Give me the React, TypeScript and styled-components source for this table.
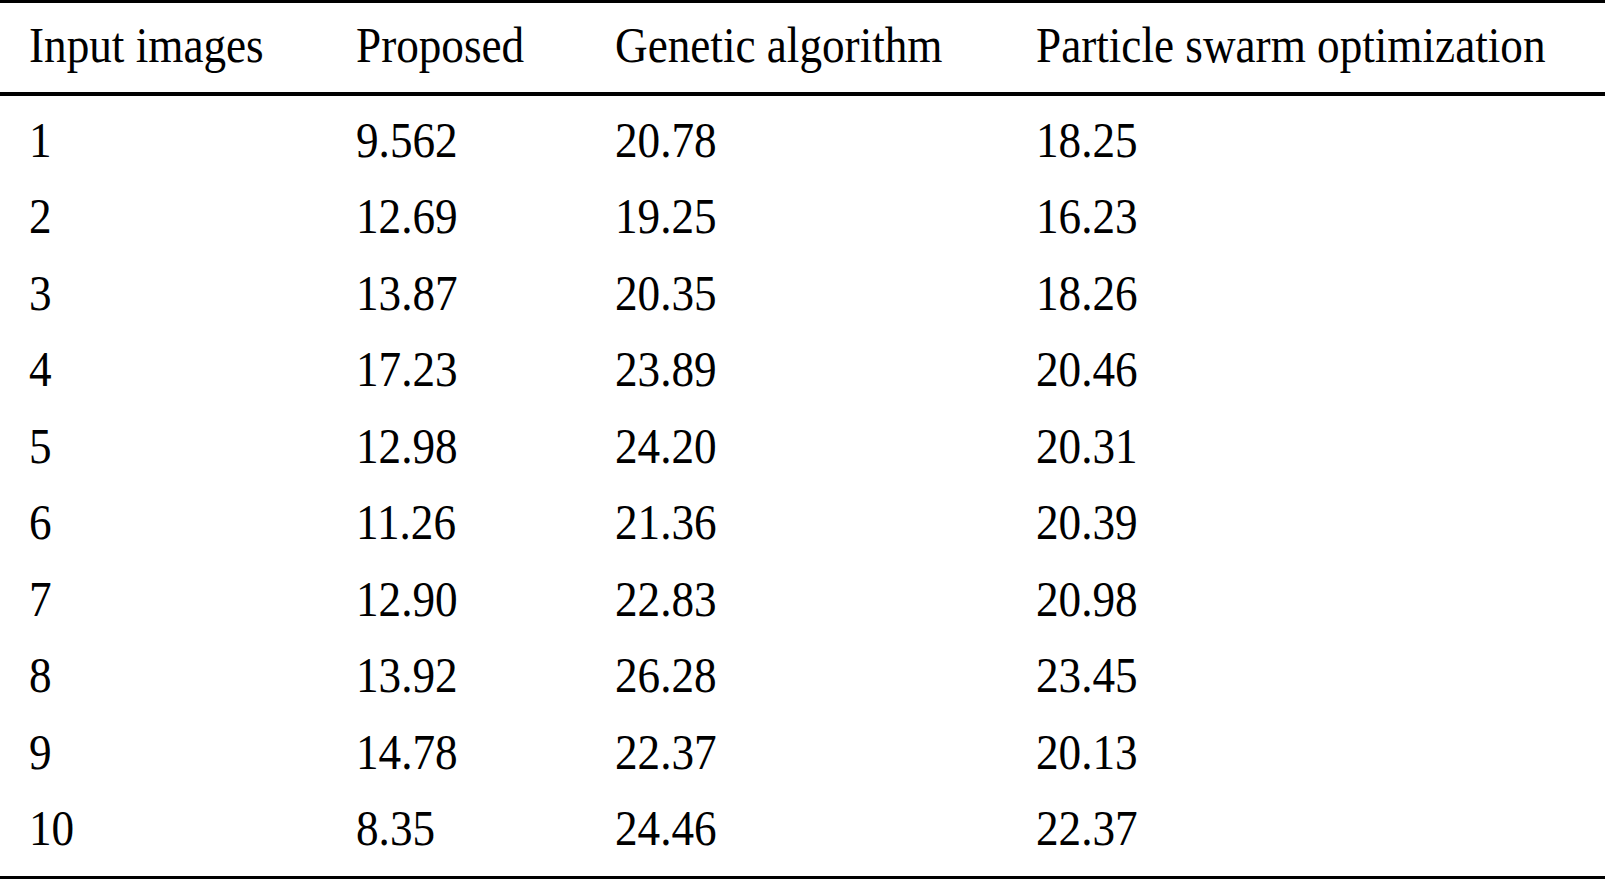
import React from 'react';
import styled, { createGlobalStyle } from 'styled-components';

const GlobalStyle = createGlobalStyle`
  html, body {
    margin: 0;
    padding: 0;
    background: #fff;
  }
`;

const Table = styled.table`
  width: 1605px;
  table-layout: fixed;
  border-collapse: separate;
  border-spacing: 0;
  border-top: 3px solid #000;
  border-bottom: 3px solid #000;

  font-family: 'Liberation Serif', 'Times New Roman', serif;
  font-size: 45.2px;
  color: #000;
`;

const HeadCell = styled.th`
  padding: 0 0 0 ${({ $first }: { $first?: boolean }) => ($first ? '29px' : '0')};
  height: 89px;
  line-height: 89px;
  font-weight: normal;
  text-align: left;
  white-space: nowrap;
  border-bottom: 4px solid #000;
`;

const Row = styled.tr`
  &:first-child td {
    padding-top: 8px;
  }
  &:last-child td {
    padding-bottom: 8px;
  }
`;

const Cell = styled.td<{ $first?: boolean }>`
  padding: 0 0 0 ${({ $first }) => ($first ? '29px' : '0')};
  line-height: 76.44px;
  white-space: nowrap;
`;

// the source type is a little taller than Times at this width
const Txt = styled.span`
  display: inline-block;
  line-height: 45px;
  transform: scaleY(1.12);
  transform-origin: 0 37.7px;
`;

const columns = ['Input images', 'Proposed', 'Genetic algorithm', 'Particle swarm optimization'];
const widths = [356, 259, 421, 569];

const rows = [
  ['1', '9.562', '20.78', '18.25'],
  ['2', '12.69', '19.25', '16.23'],
  ['3', '13.87', '20.35', '18.26'],
  ['4', '17.23', '23.89', '20.46'],
  ['5', '12.98', '24.20', '20.31'],
  ['6', '11.26', '21.36', '20.39'],
  ['7', '12.90', '22.83', '20.98'],
  ['8', '13.92', '26.28', '23.45'],
  ['9', '14.78', '22.37', '20.13'],
  ['10', '8.35', '24.46', '22.37'],
];

const App = () => {
  return (
    <>
      <GlobalStyle />
      <Table>
        <colgroup>
          {widths.map((w, i) => (
            <col key={i} style={{ width: w }} />
          ))}
        </colgroup>
        <thead>
          <tr>
            {columns.map((c, i) => (
              <HeadCell key={c} $first={i === 0}>
                <Txt>{c}</Txt>
              </HeadCell>
            ))}
          </tr>
        </thead>
        <tbody>
          {rows.map((r) => (
            <Row key={r[0]}>
              {r.map((v, i) => (
                <Cell key={i} $first={i === 0}>
                  <Txt>{v}</Txt>
                </Cell>
              ))}
            </Row>
          ))}
        </tbody>
      </Table>
    </>
  );
};

export default App;
